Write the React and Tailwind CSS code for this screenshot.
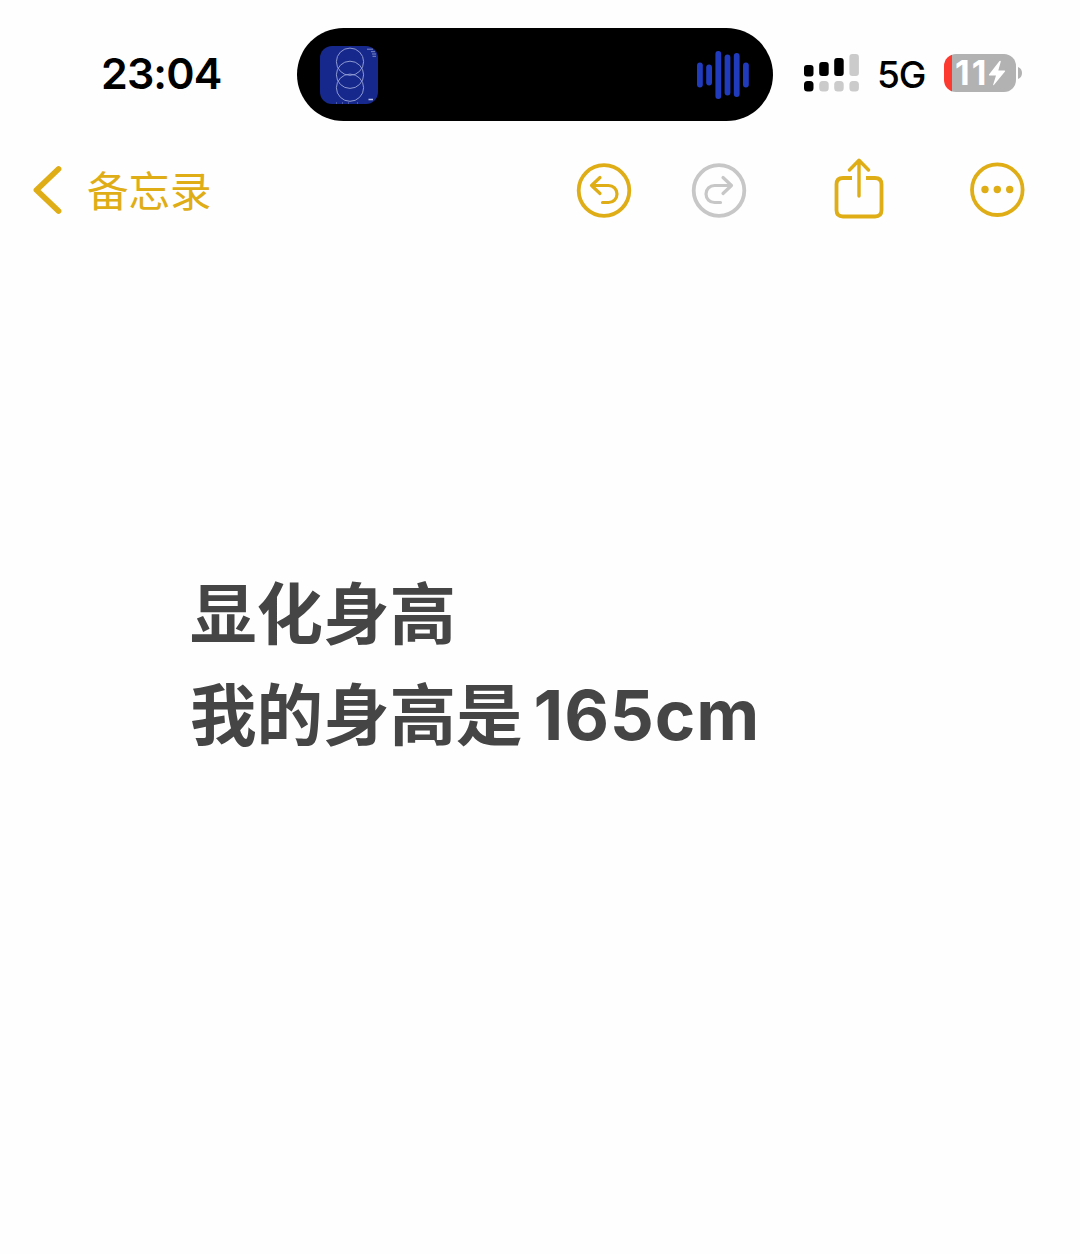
import React from "react";

const signalBars = [
  { x: 0, y: 11, h: 11.5, active: true },
  { x: 15.2, y: 8, h: 14, active: true },
  { x: 30.2, y: 4, h: 18, active: true },
  { x: 45.4, y: 0, h: 22, active: false },
];

const waveBars = [
  { x: 0, y: 11.5, h: 25 },
  { x: 9.2, y: 13.5, h: 21 },
  { x: 18.4, y: 0, h: 48 },
  { x: 27.6, y: 3.5, h: 41 },
  { x: 36.8, y: 2, h: 44 },
  { x: 46, y: 11.5, h: 25 },
];

const noteLines = [
  { text: "显化身高", latin: "" },
  { text: "我的身高是", latin: "165cm" },
];

const AlbumCover = () => (
  <svg className="h-[58px] w-[58px] rounded-[12px]" viewBox="0 0 58 58">
    <rect width="58" height="58" fill="#17288c" />
    <g fill="none" stroke="#8d9ad2" strokeWidth="1">
      <circle cx="30" cy="15.7" r="13.6" />
      <circle cx="30" cy="28.8" r="13.6" />
      <circle cx="30" cy="41.7" r="13.6" />
    </g>
    <path d="M47 3.2h6M51 5.7h4M52 8h4M52.5 10.3h3.5" stroke="#7d8bc6" strokeWidth="1" />
    <path d="M48.5 53.5h4.5" stroke="#b9c2e6" strokeWidth="1.6" />
    <path d="M16 57h1M22 57h1M28 57h1M37 57h1" stroke="#7d8bc6" strokeWidth="1" />
  </svg>
);

const Waveform = () => (
  <svg className="h-[48px] w-[52px]" viewBox="0 0 52 48">
    {waveBars.map((bar) => (
      <rect key={bar.x} x={bar.x} y={bar.y} width="5.8" height={bar.h} rx="2.9" fill="#213bbd" />
    ))}
  </svg>
);

const Signal = () => (
  <svg className="h-[38px] w-[55px]" viewBox="0 0 55 38">
    {signalBars.map((bar) => (
      <rect
        key={bar.x}
        x={bar.x}
        y={bar.y}
        width="9.5"
        height={bar.h}
        rx="3"
        fill={bar.active ? "#000" : "#cbcbcb"}
      />
    ))}
    {signalBars.map((bar, i) => (
      <rect
        key={bar.x}
        x={bar.x}
        y="27"
        width="9.5"
        height="10.5"
        rx="3.5"
        fill={i === 0 ? "#000" : "#cbcbcb"}
      />
    ))}
  </svg>
);

const Battery = () => (
  <div className="flex items-center gap-[2px]">
    <div className="flex h-[38px] w-[72px] items-center rounded-[12px] bg-[linear-gradient(to_right,#fd3a30_8px,#b2b2b2_8px)] pl-[11px]">
      <span className="text-[34px] leading-none font-bold tracking-[2px] text-white">11</span>
      <svg className="h-[26px] w-[18px] shrink-0" viewBox="0 0 18 26">
        <path
          d="M11.5 1 1 14.5q-.5 1 .6 1H8L5.2 24.5q-.2 1.2.7.5L17 11.5q.6-1-.6-1H10.3L12.8 1.5q0-1.3-1.3-.5Z"
          fill="#fff"
        />
      </svg>
    </div>
    <svg className="h-[12px] w-[4px]" viewBox="0 0 4 12">
      <path d="M0 0Q4 1.5 4 6T0 12Z" fill="#b2b2b2" />
    </svg>
  </div>
);

const UndoIcon = () => (
  <svg className="h-[56px] w-[56px]" viewBox="0 0 56 56" fill="none" stroke="currentColor" strokeLinecap="round" strokeLinejoin="round">
    <circle cx="28" cy="28.5" r="25.3" strokeWidth="3.8" />
    <path d="M24 15.5 15.5 23.5 24 31.5M16 23.5H32.5a8.5 8.5 0 0 1 0 17H26.5" strokeWidth="3.2" />
  </svg>
);

const ShareIcon = () => (
  <svg className="mb-[2px] h-[62px] w-[50px]" viewBox="0 0 50 62" fill="none" stroke="currentColor" strokeLinecap="round" strokeLinejoin="round">
    <path d="M18 20H9q-6.5 0-6.5 6.5V52q0 6.5 6.5 6.5H41q6.5 0 6.5-6.5V26.5q0-6.5-6.5-6.5H32" strokeWidth="3.8" strokeLinecap="butt" />
    <path d="M25 38V2.5M15.5 12 25 2.3 34.5 12" strokeWidth="3.4" />
  </svg>
);

const MoreIcon = () => (
  <svg className="h-[56px] w-[56px]" viewBox="0 0 56 56">
    <circle cx="28.3" cy="27.7" r="25.3" fill="none" stroke="currentColor" strokeWidth="3.8" />
    <g fill="currentColor">
      <circle cx="16" cy="27.5" r="3.7" />
      <circle cx="28.3" cy="27.5" r="3.7" />
      <circle cx="40.7" cy="27.5" r="3.7" />
    </g>
  </svg>
);

const StatusBar = () => (
  <div className="flex h-[149px] items-center text-black">
    <div className="w-[297px] pb-[2px] pl-[101px] text-[43px] leading-none font-semibold tracking-[-0.9px] whitespace-nowrap">
      23:04
    </div>
    {/* Dynamic island */}
    <div className="flex h-[93px] w-[476px] items-center justify-between rounded-full bg-black pr-[24px] pl-[23px]">
      <AlbumCover />
      <Waveform />
    </div>
    <div className="ml-[31px] flex items-center pb-[4px]">
      <Signal />
      <span className="mt-[4px] ml-[18px] w-[49px] text-[37px] leading-none font-medium tracking-[-1px]">5G</span>
      <div className="ml-[18px]">
        <Battery />
      </div>
    </div>
  </div>
);

const Toolbar = () => (
  <div className="flex h-[82px] items-center text-[#dfad16]">
    <div className="flex w-[576px] items-center pl-[32px]">
      <svg className="h-[50px] w-[31px]" viewBox="0 0 31 50" fill="none">
        <path d="M26.5 4 4.5 25 26.5 46" stroke="currentColor" strokeWidth="5.8" strokeLinecap="round" strokeLinejoin="round" />
      </svg>
      <span className="mt-[5px] ml-[24px] text-[41.5px] leading-none">备忘录</span>
    </div>
    <UndoIcon />
    <div className="ml-[59px] -scale-x-100 text-[#c7c7c7]">
      <UndoIcon />
    </div>
    <div className="ml-[87px]">
      <ShareIcon />
    </div>
    <div className="ml-[85px]">
      <MoreIcon />
    </div>
  </div>
);

const App = () => {
  return (
    <div className="h-[1254px] w-[1080px] overflow-hidden bg-[#fefefe] font-['Inter','Noto_Sans_CJK_SC',sans-serif]">
      <StatusBar />
      <Toolbar />
      <div className="pt-[334px] pl-[190px] text-[66.5px] leading-[101px] font-bold text-[#454545]">
        {noteLines.map((line) => (
          <p key={line.text} className="flex whitespace-nowrap">
            <span>{line.text}</span>
            {line.latin && (
              <span className="-mt-[1px] ml-[11px] text-[69px] tracking-[0.9px]">{line.latin}</span>
            )}
          </p>
        ))}
      </div>
    </div>
  );
};

export default App;
